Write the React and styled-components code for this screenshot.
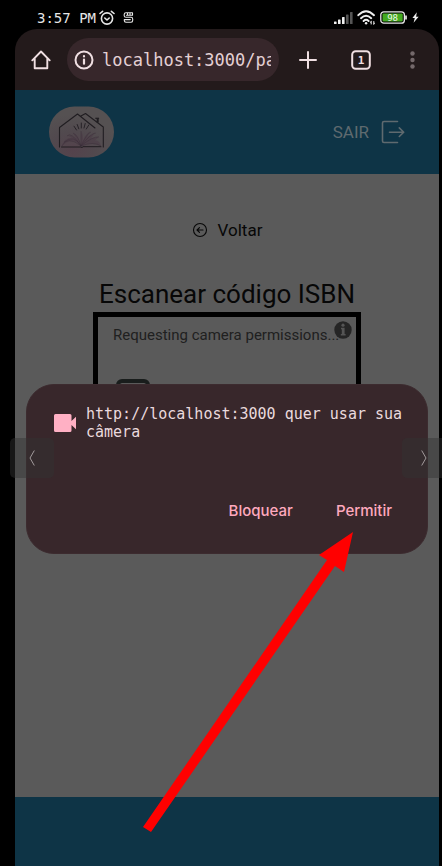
import React from "react";
import styled, { createGlobalStyle } from "styled-components";

const GlobalStyle = createGlobalStyle`
  * { box-sizing: border-box; }
  body { margin: 0; background: #000; }
  button { border: 0; padding: 0; background: none; font: inherit; color: inherit; cursor: pointer; }
  svg { display: block; flex: none; }
`;

const mono = `"DejaVu Sans Mono", monospace`;
const sans = `Roboto, sans-serif`;

const Phone = styled.div`
  position: relative;
  display: flex;
  flex-direction: column;
  min-height: 100vh;
  padding: 0 3px 0 15px;
  overflow: hidden;
  background: #000;
  font-family: ${sans};
`;

const StatusBar = styled.div`
  display: flex;
  align-items: center;
  height: 29px;
  padding: 6px 20px 0 22px;
  color: #e6e6e6;
  font: 14px/20px ${mono};
`;

const StatusGroup = styled.div`
  display: flex;
  align-items: center;
  gap: ${(p) => p.$gap}px;
  margin-left: ${(p) => (p.$end ? "auto" : "0")};
`;

const StatusIcons = styled.div`
  display: flex;
  align-items: center;
  gap: 8px;
`;

const BrowserBar = styled.div`
  display: flex;
  align-items: center;
  height: 61px;
  padding: 0 18px 0 16px;
  border-radius: 22px 22px 0 0;
  background: #231a1b;
  color: #f0dfe2;
`;

const IconButton = styled.button`
  display: flex;
  color: ${(p) => (p.$dim ? "#74696b" : "#f0dfe2")};
`;

const AddressPill = styled.div`
  display: flex;
  flex: 1;
  align-items: center;
  gap: 8px;
  min-width: 0;
  height: 43px;
  margin: 0 20px 0 16px;
  padding: 0 8px 0 7px;
  border-radius: 22px;
  background: #37272b;
`;

const AddressInput = styled.input`
  flex: 1;
  min-width: 0;
  width: 0;
  padding: 0;
  border: 0;
  outline: 0;
  background: none;
  color: #e4d0d4;
  font: 17px/24px ${mono};
`;

const Actions = styled.div`
  display: flex;
  align-items: center;
  gap: 34px;
`;

const SiteHeader = styled.header`
  display: flex;
  align-items: center;
  justify-content: space-between;
  height: 84px;
  padding: 0 34px;
  background: #0e3446;
`;

const LogoLink = styled.a`
  display: block;
`;

const Logout = styled.button`
  display: flex;
  align-items: center;
  gap: 12px;
  color: #5f6a6f;
  font-size: 17px;
  line-height: 24px;
`;

const Main = styled.main`
  display: flex;
  flex: 1;
  flex-direction: column;
  align-items: center;
  padding-top: 44px;
  background: #5a5a5a;
  color: #070707;
`;

const BackLink = styled.a`
  display: flex;
  align-items: center;
  gap: 10px;
  color: inherit;
  font-size: 17px;
  line-height: 24px;
  text-decoration: none;
`;

const Title = styled.h1`
  margin: 35px 0 0;
  font-size: 26px;
  font-weight: 400;
  line-height: 35px;
`;

const Scanner = styled.section`
  position: relative;
  width: 268px;
  height: 200px;
  border: 5px solid #000;
  padding: 8px 15px;
  color: #202020;
  font-size: 15px;
  line-height: 20px;
  white-space: nowrap;
`;

const InfoBadge = styled.button`
  position: absolute;
  top: 4px;
  right: 4px;
`;

const Camera = styled.div`
  margin: 34px 0 0 3px;
`;

const SiteFooter = styled.footer`
  height: 69px;
  background: #0e3446;
`;

const Dialog = styled.div`
  position: absolute;
  top: 384px;
  left: 26px;
  right: 14px;
  display: flex;
  flex-direction: column;
  justify-content: space-between;
  height: 170px;
  padding: 20px 24px 31px 27px;
  border: 1px solid #3c2b2f;
  border-radius: 28px;
  background: #38272b;
`;

const Message = styled.div`
  display: flex;
  align-items: center;
  gap: 10px;
  color: #eadade;
  font: 15px/18px ${mono};
`;

const MessageText = styled.p`
  margin: 0;
`;

const DialogActions = styled.div`
  display: flex;
  justify-content: flex-end;
  gap: 43px;
  padding-right: 11px;
`;

const DialogButton = styled.button`
  color: #ffa9be;
  font: 500 15px/22px Inter, sans-serif;
`;

const SlideButton = styled.button`
  position: absolute;
  top: 438px;
  ${(p) => (p.$next ? "right: -4px;" : "left: 10px;")}
  display: flex;
  align-items: center;
  justify-content: center;
  width: 44px;
  height: 40px;
  border-radius: 5px;
  background: rgba(50, 50, 50, 0.45);
`;

const Pointer = styled.svg`
  position: absolute;
  top: 532px;
  left: 143px;
  pointer-events: none;
`;

function Line({ children, size = 20, box = 24, width = 2 }) {
  return (
    <svg width={size} height={size} viewBox={`0 0 ${box} ${box}`} fill="none"
      stroke="currentColor" strokeWidth={width} strokeLinecap="round" strokeLinejoin="round" aria-hidden="true">
      {children}
    </svg>
  );
}

const AlarmIcon = () => (
  <Line size={16} box={16} width={1.6}>
    <circle cx="8" cy="8.5" r="5.6" />
    <path d="M1 3.5 3.6 1.3M15 3.5 12.4 1.3M5.8 8l2.2 2 2.2-2" />
  </Line>
);

const AppMark = () => (
  <Line size={11} box={11} width={1.1}>
    <path d="M9.5 .8H3Q1.2 .8 1.2 2.500v1.300Q1.200 5.300 3 5.300h5Q9.700 5.300 9.700 7v1.200Q9.700 10.200 8 10.200H3Q1.300 10.200 1.300 8.500V7.600h6M3.500 3.300h6V1M4.500 1v2M7 1v2" />
  </Line>
);

const SignalIcon = () => (
  <svg width="19" height="12" viewBox="0 0 19 12" aria-hidden="true">
    <g fill="#f0f0f0">
      <rect x="0" y="9.5" width="2.6" height="2.5" rx=".6" />
      <rect x="4" y="7.5" width="2.6" height="4.5" rx=".6" />
      <rect x="8" y="5" width="2.6" height="7" rx=".6" />
    </g>
    <g fill="#555">
      <rect x="12" y="2.5" width="2.6" height="9.5" rx=".6" />
      <rect x="16" y="0" width="2.6" height="12" rx=".6" />
    </g>
  </svg>
);

const WifiIcon = () => (
  <svg width="19" height="15" viewBox="0 0 19 15" fill="none" stroke="#f0f0f0" strokeWidth="1.9" strokeLinecap="round" aria-hidden="true">
    <path d="M1.3 5.2Q9 -2.6 17 5.2M4 8.2q5-4.8 10.2 0M6.6 11q2.5-2.3 5 0" />
    <circle cx="9.1" cy="13.2" r="1.2" fill="#f0f0f0" stroke="none" />
    <path d="M14.2 11.500v2.500M16.800 11.500v2.500M13.400 12.300l.8-.8M17.600 13.200l-.8.8" strokeWidth="1" />
  </svg>
);

const BatteryIcon = () => (
  <svg width="28" height="13" viewBox="0 0 28 13" aria-label="98%">
    <rect x=".8" y=".8" width="23.6" height="11.4" rx="3" fill="none" stroke="#e8e8e8" strokeWidth="1.3" />
    <rect x="2.5" y="2.5" width="20.2" height="8" rx="1" fill="#43aa20" />
    <path d="M26 4.5v4" stroke="#ddd" strokeWidth="1.8" />
    <text x="12.6" y="9.7" textAnchor="middle" fill="#edf5e9" fontSize="9" fontFamily="DejaVu Sans Mono, monospace">98</text>
  </svg>
);

const BoltIcon = () => (
  <svg width="7" height="11" viewBox="0 0 8 12" fill="#eee" aria-hidden="true">
    <path d="M5.5 0 .5 6.7h2.7L1.8 12l5.8-7H4.7z" />
  </svg>
);

const HomeIcon = () => (
  <Line size={20} box={20} width={1.9}>
    <path d="M1.3 10.3 10 1.5l8.7 8.8M3.7 8.5v9.7h12.6V8.5" />
  </Line>
);

const InfoIcon = () => (
  <Line size={20} box={20}>
    <circle cx="10" cy="10" r="8.5" />
    <path d="M10 9.5v4.2M10 6.2v.2" strokeWidth="2.2" />
  </Line>
);

const HouseLogo = () => (
  <svg width="65" height="52" viewBox="0 0 65 52" role="img" aria-label="Casa com livro">
    <defs>
      <radialGradient id="cover" cx=".36" cy=".85" r=".7">
        <stop offset="0" stopColor="#54424c" />
        <stop offset=".5" stopColor="#51494e" />
        <stop offset="1" stopColor="#555152" />
      </radialGradient>
    </defs>
    <rect width="65" height="51" y=".5" rx="25.5" fill="url(#cover)" />
    <g fill="none" stroke="#201d21" strokeLinecap="round" strokeLinejoin="round">
      <path d="M10.500 41V21.500L28.500 8 46 22M31.500 10.200 36.500 7.500 54.300 21V41" strokeWidth="1.100" />
      <path d="M46.300 12.300h3.800" strokeWidth="1.200" strokeLinecap="butt" />
      <path d="M48.700 12.500v4" strokeWidth="2" strokeLinecap="butt" />
      <path d="M12.500 41h19.500l1 .6 1-.9h18" strokeWidth="1" />
      <path d="M27.500 24 25 20.200M29.800 22.800l-1.600-4.300M32.300 22v-5M35 22l1.200-4.500M37.300 23l2.500-4" strokeWidth=".9" />
    </g>
    <path d="M32 40.500C27 34 20 33 12.500 40.300Q16 31 23 32L18 29q9 0 14 11.500L24 27q6 2 8 13.500 0-10 0-15 4 6 0 15Q35 29 41 25.500L38 31l8-4.500-4 6 8-2-4 4q5 0 6 5.700Q41 35 32 40.500Z" fill="#493745" opacity=".45" />
    <g fill="none" stroke="#352a36" strokeWidth=".5" opacity=".75">
      <path d="M13 40Q18 29 32 40Q22 25 18 30M15 36Q25 28 32 40Q29 29 24 27M32 40Q38 27 42 26M32 40Q42 27 47 27M32 40Q44 30 50 31M32 40Q45 35 52 40M32 40V25" />
    </g>
  </svg>
);

const ExitIcon = () => (
  <Line size={24} box={24} width={1.6}>
    <path d="M16.500 1.500H3Q1.500 1.500 1.500 3v18Q1.500 22.500 3 22.500h13.500M8.500 12.200H22.500M18.300 7.900 22.700 12.200 18.300 16.500" />
  </Line>
);

const BackIcon = () => (
  <Line size={16} box={16} width={1.1}>
    <circle cx="8" cy="8" r="6.500" />
    <path d="M11 8H5.200M7.500 5.600 5 8l2.500 2.400" />
  </Line>
);

export default function App() {
  return (
    <>
      <GlobalStyle />
      <Phone>
        <StatusBar>
          <StatusGroup $gap={3}>
            <span>3:57 PM</span>
            <StatusIcons>
              <AlarmIcon />
              <AppMark />
            </StatusIcons>
          </StatusGroup>
          <StatusGroup $gap={4} $end>
            <SignalIcon />
            <WifiIcon />
            <BatteryIcon />
            <BoltIcon />
          </StatusGroup>
        </StatusBar>

        <BrowserBar>
          <IconButton aria-label="Página inicial"><HomeIcon /></IconButton>
          <AddressPill>
            <InfoIcon />
            <AddressInput aria-label="Endereço" defaultValue="localhost:3000/pa" />
          </AddressPill>
          <Actions>
            <IconButton aria-label="Nova aba">
              <Line size={18} box={18}><path d="M9 1v16M1 9h16" /></Line>
            </IconButton>
            <IconButton aria-label="Abas">
              <svg width="20" height="20" viewBox="0 0 20 20" aria-hidden="true">
                <rect x="1.200" y="1.200" width="17.600" height="17.600" rx="3.500" fill="none" stroke="currentColor" strokeWidth="2" />
                <text x="10" y="14" textAnchor="middle" fill="currentColor" fontSize="11" fontWeight="700" fontFamily="DejaVu Sans Mono, monospace">1</text>
              </svg>
            </IconButton>
            <IconButton $dim aria-label="Mais opções">
              <svg width="16" height="20" viewBox="0 0 16 20" fill="currentColor" aria-hidden="true">
                <circle cx="7.500" cy="3.500" r="2.200" /><circle cx="7.500" cy="10" r="2.200" /><circle cx="7.500" cy="16.500" r="2.200" />
              </svg>
            </IconButton>
          </Actions>
        </BrowserBar>

        <SiteHeader>
          <LogoLink href="#"><HouseLogo /></LogoLink>
          <Logout>SAIR<ExitIcon /></Logout>
        </SiteHeader>

        <Main>
          <BackLink href="#"><BackIcon />Voltar</BackLink>
          <Title>Escanear código ISBN</Title>
          <Scanner>
            Requesting camera permissions...
            <InfoBadge aria-label="Informações">
              <svg width="18" height="18" viewBox="0 0 18 18" aria-hidden="true">
                <circle cx="9" cy="9" r="8.700" fill="#252525" />
                <path d="M7 6.800h3.600v6.200h1v1.500H6.800V13h1V8.300H7z" fill="#555" />
                <circle cx="9" cy="4.200" r="1.600" fill="#555" />
              </svg>
            </InfoBadge>
            <Camera>
              <svg width="34" height="34" viewBox="0 0 34 34" fill="none" stroke="#191d1c" strokeWidth="4" aria-hidden="true">
                <rect x="2" y="2" width="30" height="30" rx="4" /><circle cx="17" cy="17" r="6" />
              </svg>
            </Camera>
          </Scanner>
        </Main>
        <SiteFooter />

        <Dialog role="dialog" aria-labelledby="permission-text">
          <Message>
            <svg width="22" height="18" viewBox="0 0 22 18" fill="#ffb0c4" aria-hidden="true">
              <path d="M1.500 0h14.500q1.500 0 1.500 1.500V7L22 2.700v12.600L17.500 11v5.500q0 1.500-1.500 1.500H1.500Q0 18 0 16.500v-15Q0 0 1.500 0Z" />
            </svg>
            <MessageText id="permission-text">http://localhost:3000 quer usar sua câmera</MessageText>
          </Message>
          <DialogActions>
            <DialogButton>Bloquear</DialogButton>
            <DialogButton>Permitir</DialogButton>
          </DialogActions>
        </Dialog>

        <SlideButton aria-label="Anterior">
          <svg width="6" height="16" viewBox="0 0 6 16" fill="none" stroke="#a29b9c" aria-hidden="true"><path d="M5.300.500 1 8l4.300 7.500" /></svg>
        </SlideButton>
        <SlideButton $next aria-label="Próximo">
          <svg width="6" height="16" viewBox="0 0 6 16" fill="none" stroke="#a29b9c" aria-hidden="true"><path d="M.700.500 5 8 .700 15.500" /></svg>
        </SlideButton>

        <Pointer width="211" height="301" viewBox="143 532 211 301" aria-hidden="true">
          <path d="M353 532 319 555 327 560 143 827 151 832 335 566 344 572Z" fill="#f00" />
        </Pointer>
      </Phone>
    </>
  );
}
